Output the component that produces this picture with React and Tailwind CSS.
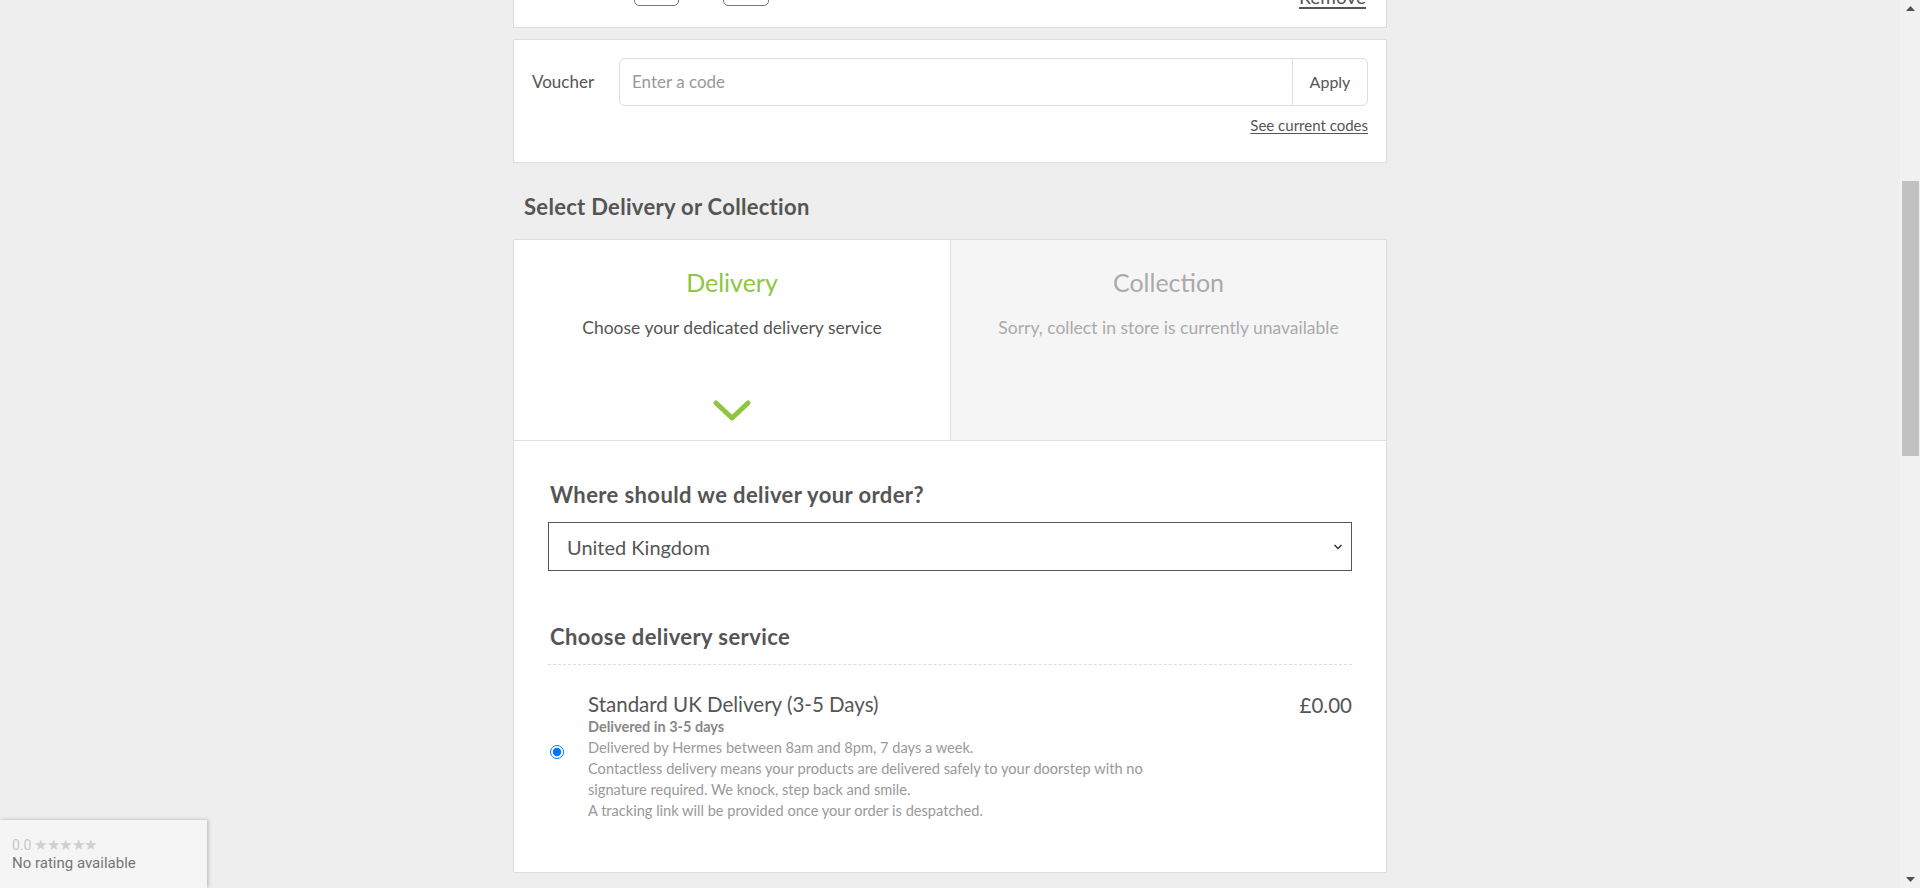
import React from "react";

export default function App() {
  return (
    <div className="relative flex h-[888px] w-full overflow-hidden bg-[#eeeeee] text-[#555555]" style={{ fontFamily: "Lato, 'Open Sans', Arial, sans-serif" }}>
      <main className="flex-1 overflow-hidden">
        <div className="mx-auto w-[874px]">
          {/* Top card (scrolled, only bottom visible) */}
          <div className="h-[28px] overflow-hidden border-x border-b border-[#dddddd] bg-white">
            <div className="-mt-[26px] flex items-start">
              <div className="ml-[120px] h-[32px] w-[45px] rounded-[5px] border border-[#777777]" />
              <div className="ml-[44px] h-[32px] w-[46px] rounded-[5px] border border-[#777777]" />
              <div className="ml-auto mr-[20px] mt-[11px] text-[19px] leading-[24px] text-[#555555] underline decoration-[2px] underline-offset-[3px]">Remove</div>
            </div>
          </div>

          {/* Voucher */}
          <div className="mt-[11px] h-[124px] border border-[#dddddd] bg-white px-[18px] pt-[18px]">
            <div className="flex items-center">
              <div className="w-[87px] text-[17px] text-[#555555]">Voucher</div>
              <div className="flex h-[48px] flex-1 items-stretch rounded-[6px] border border-[#dddddd]">
                <div className="flex flex-1 items-center pl-[12px] text-[17px] text-[#999999]">Enter a code</div>
                <div className="flex w-[75px] items-center justify-center border-l border-[#dddddd] text-[16px] text-[#555555]">Apply</div>
              </div>
            </div>
            <div className="mt-[9px] text-right text-[15px] leading-[20px] text-[#555555] underline underline-offset-[2px]">See current codes</div>
          </div>

          {/* Heading */}
          <div className="px-[11px] pt-[30px] pb-[18px] text-[22px] font-bold leading-[28px] tracking-[0.3px] text-[#555555]">Select Delivery or Collection</div>

          {/* Tabs */}
          <div className="grid h-[202px] grid-cols-2 border border-[#dddddd]">
            <div className="flex flex-col items-center bg-white pt-[26px]">
              <div className="text-[25px] leading-[32px] text-[#8dc63f]">Delivery</div>
              <div className="mt-[18px] text-[17.5px] leading-[24px] text-[#555555]">Choose your dedicated delivery service</div>
              <svg className="mt-[59px]" width="40" height="24" viewBox="0 0 40 24" fill="none">
                <path d="M4 4 L20 19 L36 4" stroke="#8dc63f" strokeWidth="5" strokeLinecap="round" strokeLinejoin="round" />
              </svg>
            </div>
            <div className="flex flex-col items-center border-l border-[#dddddd] bg-[#f5f5f5] pt-[26px]">
              <div className="text-[25px] leading-[32px] text-[#aaaaaa]">Collection</div>
              <div className="mt-[18px] text-[17.5px] leading-[24px] text-[#aaaaaa]">Sorry, collect in store is currently unavailable</div>
            </div>
          </div>

          {/* Delivery content */}
          <div className="h-[432px] border-x border-b border-[#dddddd] bg-white px-[34px] pt-[40px]">
            <div className="px-[2px] text-[22px] font-bold leading-[28px] tracking-[0.4px] text-[#555555]">Where should we deliver your order?</div>
            <div className="mt-[13px] flex h-[49px] items-center justify-between border border-[#555555] pl-[18px] pr-[8px]">
              <span className="text-[20px] text-[#555555]">United Kingdom</span>
              <svg width="10" height="8" viewBox="0 0 10 8" fill="none">
                <path d="M1.5 2 L5 5.5 L8.5 2" stroke="#333333" strokeWidth="1.5" />
              </svg>
            </div>
            <div className="mt-[52px] px-[2px] text-[22px] font-bold leading-[28px] tracking-[0.4px] text-[#555555]">Choose delivery service</div>
            <div className="mt-[13px] border-t border-dashed border-[#dddddd]" />
            <div className="mt-[28px] flex items-start">
              <div className="flex h-[118px] w-[40px] items-center pl-[2px]">
                <input type="radio" checked readOnly className="m-0 h-[14px] w-[14px] accent-[#0075ff]" />
              </div>
              <div className="flex-1">
                <div className="text-[20.5px] leading-[23px] text-[#555555]">Standard UK Delivery (3-5 Days)</div>
                <div className="text-[14.5px] font-bold leading-[21px] text-[#888888]">Delivered in 3-5 days</div>
                <div className="whitespace-nowrap text-[14.6px] leading-[21px] text-[#999999]">
                  Delivered by Hermes between 8am and 8pm, 7 days a week.
                  <br />
                  Contactless delivery means your products are delivered safely to your doorstep with no
                  <br />
                  signature required. We knock, step back and smile.
                  <br />
                  A tracking link will be provided once your order is despatched.
                </div>
              </div>
              <div className="text-[20.5px] leading-[24px] text-[#555555]">£0.00</div>
            </div>
          </div>
        </div>
      </main>

      {/* Fake scrollbar */}
      <div className="flex w-[20px] flex-col items-center bg-[#f1f1f1]">
        <div className="flex h-[17px] w-full items-center justify-center">
          <svg width="9" height="5" viewBox="0 0 9 5"><path d="M0 5 L4.5 0 L9 5 Z" fill="#505050" /></svg>
        </div>
        <div className="mt-[164px] h-[275px] w-[17px] bg-[#c1c1c1]" />
        <div className="flex-1" />
        <div className="flex h-[17px] w-full items-center justify-center">
          <svg width="9" height="5" viewBox="0 0 9 5"><path d="M0 0 L4.5 5 L9 0 Z" fill="#505050" /></svg>
        </div>
      </div>

      {/* Rating widget overlay */}
      <div className="absolute bottom-0 left-0 h-[68px] w-[207px] bg-[#f5f5f5] pl-[12px] pt-[16px] shadow-[1px_0_4px_rgba(0,0,0,0.25)]" style={{ fontFamily: "Roboto, Arial, sans-serif" }}>
        <div className="flex items-center text-[14px] leading-[18px] text-[#c8c8c8]">
          <span>0.0</span>
          <span className="ml-[3px] text-[15px] tracking-[-0.5px] text-[#d0d0d0]">★★★★★</span>
        </div>
        <div className="text-[15px] leading-[19px] text-[#757575]">No rating available</div>
      </div>
    </div>
  );
}
